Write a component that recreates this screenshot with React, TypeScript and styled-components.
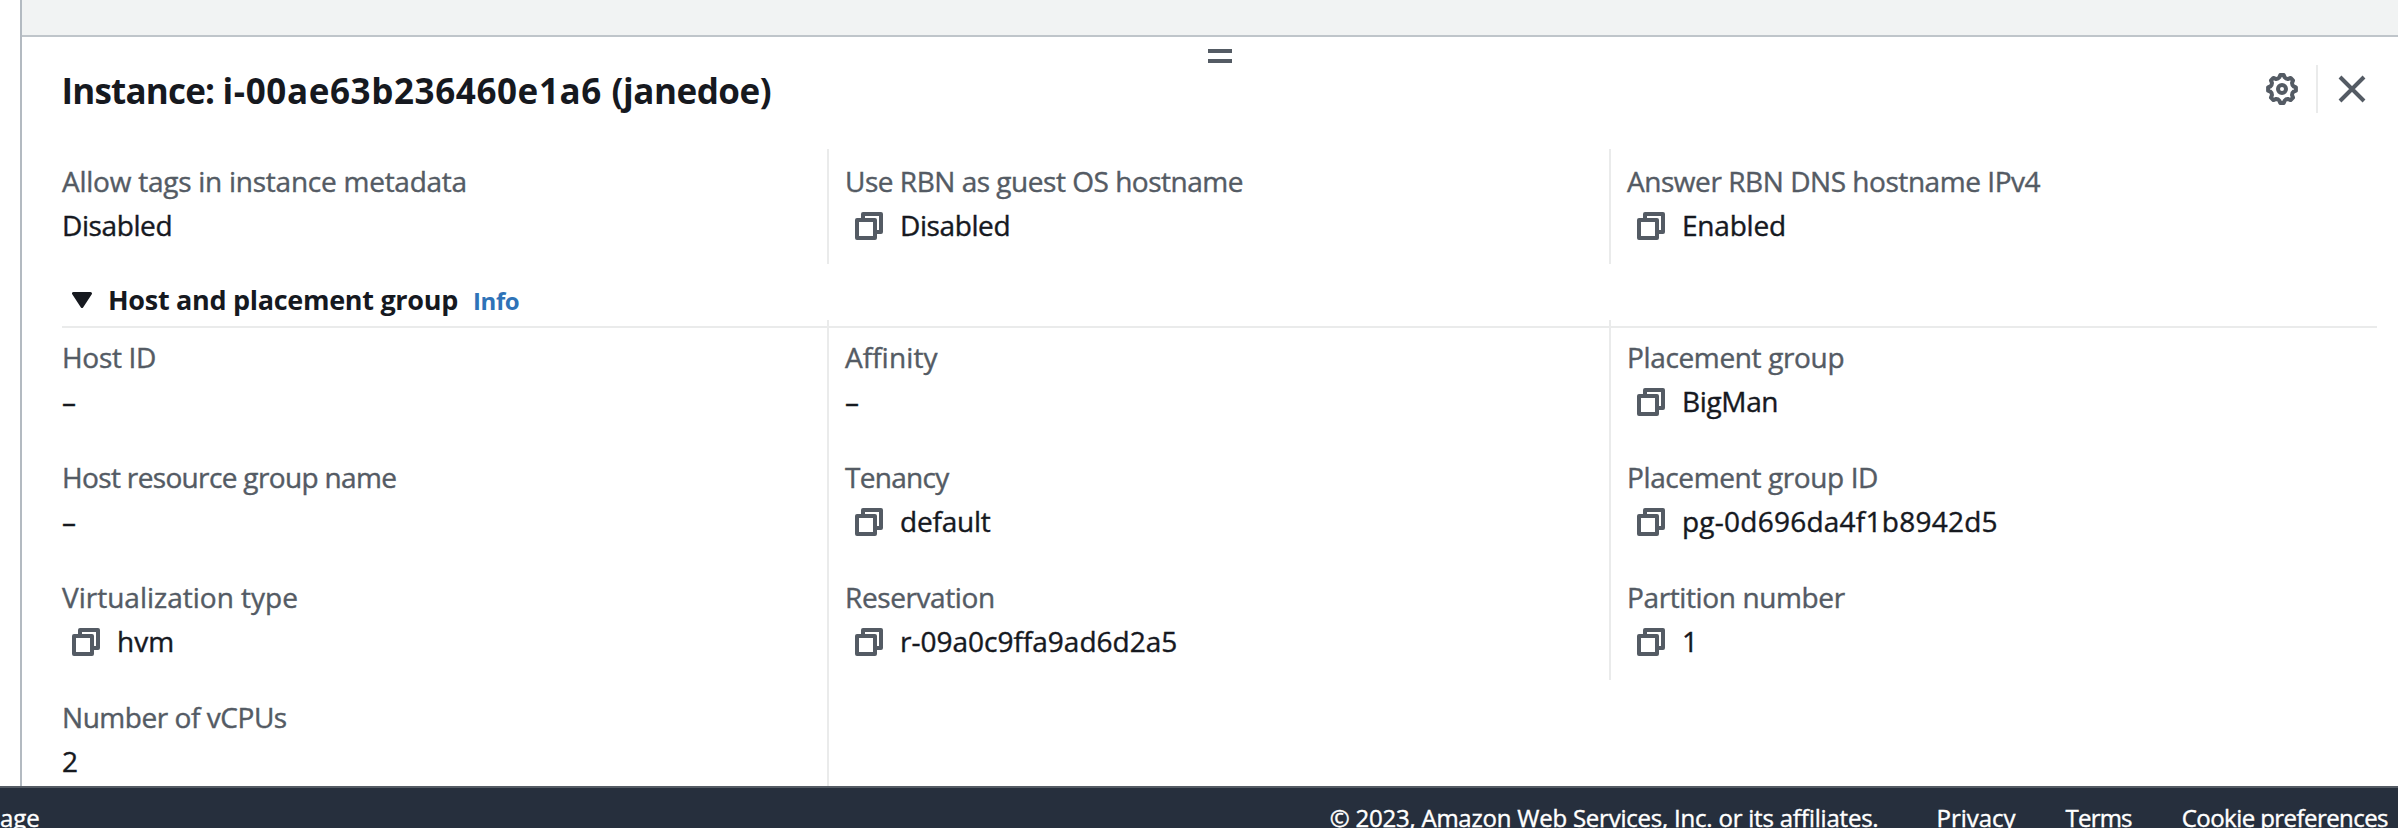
import React from 'react';
import styled, { createGlobalStyle } from 'styled-components';

const ink = '#16191f';
const muted = '#545b64';
const rule = '#eaebeb';

const GlobalStyle = createGlobalStyle`
  * { box-sizing: border-box; }
  body {
    margin: 0;
    background: #fff;
    color: ${ink};
    font-family: "Open Sans", "Noto Sans", sans-serif;
    font-feature-settings: "liga" 1;
    overflow: hidden;
  }
`;

const Page = styled.div`
  width: 2398px;
  height: 828px;
  display: flex;
  flex-direction: column;
  overflow: hidden;
`;

const Workspace = styled.main`
  height: 786px;
  flex: none;
  margin-left: 20px;
  border-left: 2px solid #b3bac1;
  display: flex;
  flex-direction: column;
  overflow: hidden;
`;

const ListArea = styled.div`
  height: 35px;
  flex: none;
  background: #f1f3f3;
`;

const SplitPanel = styled.section`
  flex: 1;
  min-height: 0;
  border-top: 2px solid #bfc5ca;
  padding: 12px 21px 0 40px;
`;

const DragHandle = styled.div`
  width: 24px;
  height: 14px;
  margin: 0 auto 2px;
  border: solid ${muted};
  border-width: 4px 0;
`;

const PanelHeader = styled.header`
  height: 48px;
  display: flex;
  align-items: center;
  padding-right: 9px;
`;

const Title = styled.h2`
  flex: 1;
  margin: 4px 0 0 -0.5px;
  font-size: 35px;
  line-height: 48px;
  font-weight: 700;
`;

const Tracked = styled.span<{ $track: number }>`
  letter-spacing: ${p => p.$track}px;
`;

const IconButton = styled.button`
  width: 32px;
  height: 32px;
  padding: 0;
  border: 0;
  background: none;
  color: ${muted};
  svg { display: block; }
`;

const ActionDivider = styled.span`
  width: 2px;
  height: 48px;
  margin: 0 18px;
  background: ${rule};
`;

const Columns = styled.div<{ $offset: number }>`
  display: grid;
  grid-template-columns: 765px 782px 1fr;
  align-items: start;
  margin-top: ${p => p.$offset}px;
`;

const Column = styled.div<{ $height: number; $top: number; $divided?: boolean }>`
  height: ${p => p.$height}px;
  padding-top: ${p => p.$top}px;
  ${p => p.$divided && `border-left: 2px solid ${rule}; padding-left: 16px;`}
`;

const Field = styled.div`
  height: 120px;
`;

const Label = styled.div<{ $track: number }>`
  font-size: 28px;
  line-height: 44px;
  color: ${muted};
  letter-spacing: ${p => p.$track}px;
  -webkit-text-stroke: 0.4px currentColor;
  white-space: nowrap;
`;

const Value = styled.div<{ $track: number }>`
  display: flex;
  align-items: center;
  gap: 17px;
  font-size: 28px;
  line-height: 44px;
  letter-spacing: ${p => p.$track}px;
  -webkit-text-stroke: 0.4px currentColor;
  white-space: nowrap;
  svg { flex: none; margin: 2px 0 0 10px; color: ${muted}; }
`;

const SectionHeader = styled.div`
  height: 64px;
  display: flex;
  align-items: baseline;
  padding: 18px 0 0 10px;
  border-bottom: 2px solid ${rule};
  > svg { margin-right: 16px; transform: translateY(-2px); }
`;

const SectionTitle = styled.h3`
  margin: 0;
  font-size: 27px;
  line-height: 36px;
  letter-spacing: -0.3px;
`;

const InfoLink = styled.a`
  margin-left: 15px;
  font-size: 24px;
  line-height: 32px;
  font-weight: 700;
  letter-spacing: -0.4px;
  color: #2e73b8;
`;

const Footer = styled.footer`
  flex: none;
  height: 42px;
  display: flex;
  gap: 50px;
  padding: 14px 10px 0 0;
  border-top: 2px solid ${muted};
  background: #262f3d;
  color: #fff;
  font-size: 24px;
  line-height: 32px;
  -webkit-text-stroke: 0.4px currentColor;
  overflow: hidden;
`;

const FooterItem = styled.span<{ $track?: number; $push?: boolean }>`
  white-space: nowrap;
  letter-spacing: ${p => p.$track ?? 0}px;
  ${p => p.$push && 'margin-left: auto; margin-right: 8px;'}
`;

const CopyIcon = () => (
  <svg width="28" height="28" viewBox="0 0 28 28" fill="none" stroke="currentColor" strokeWidth="4" strokeLinejoin="round">
    <path d="M8 6V2H26V20H22" />
    <rect x="2" y="8" width="18" height="18" />
  </svg>
);

const gearOutline = (() => {
  const at = (deg: number, r: number) => {
    const a = (deg * Math.PI) / 180;
    return `${(16 + r * Math.cos(a)).toFixed(2)} ${(16 + r * Math.sin(a)).toFixed(2)}`;
  };
  let d = `M${at(-7, 14)}`;
  for (let tooth = 0; tooth < 360; tooth += 45) {
    d += `L${at(tooth + 7, 14)}L${at(tooth + 13, 11.9)}Q${at(tooth + 22.5, 10.6)} ${at(tooth + 32, 11.9)}L${at(tooth + 38, 14)}`;
  }
  return d + 'Z';
})();

const GearIcon = () => (
  <svg width="32" height="32" viewBox="0 0 32 32" fill="none" stroke="currentColor" strokeWidth="4" strokeLinejoin="round">
    <path d={gearOutline} />
    <circle cx="16" cy="16" r="4" />
  </svg>
);

const CloseIcon = () => (
  <svg width="32" height="32" viewBox="0 0 32 32" fill="none" stroke="currentColor" strokeWidth="4">
    <path d="M4 4L28 28M28 4L4 28" />
  </svg>
);

const CaretIcon = () => (
  <svg width="20" height="16" viewBox="0 0 20 16" fill={ink} stroke={ink} strokeWidth="3" strokeLinejoin="round">
    <path d="M1.5 1.5H18.5L10 14.5Z" />
  </svg>
);

type Entry = { label: string; track: number; value: string; valueTrack?: number; copy?: boolean };

const hostnameColumns: Entry[][] = [
  [{ label: 'Allow tags in instance metadata', track: -0.25, value: 'Disabled', valueTrack: -0.4 }],
  [{ label: 'Use RBN as guest OS hostname', track: -0.48, value: 'Disabled', valueTrack: -0.4, copy: true }],
  [{ label: 'Answer RBN DNS hostname IPv4', track: -0.45, value: 'Enabled', valueTrack: -0.2, copy: true }],
];

const placementColumns: Entry[][] = [
  [
    { label: 'Host ID', track: -0.3, value: '–' },
    { label: 'Host resource group name', track: -0.65, value: '–' },
    { label: 'Virtualization type', track: 0, value: 'hvm', copy: true },
    { label: 'Number of vCPUs', track: -0.45, value: '2' },
  ],
  [
    { label: 'Affinity', track: 0.15, value: '–' },
    { label: 'Tenancy', track: -0.7, value: 'default', valueTrack: -0.2, copy: true },
    { label: 'Reservation', track: -0.4, value: 'r-09a0c9ffa9ad6d2a5', copy: true },
  ],
  [
    { label: 'Placement group', track: -0.35, value: 'BigMan', valueTrack: -0.35, copy: true },
    { label: 'Placement group ID', track: -0.38, value: 'pg-0d696da4f1b8942d5', valueTrack: 0.24, copy: true },
    { label: 'Partition number', track: -0.38, value: '1', copy: true },
  ],
];

const Fields = ({ items }: { items: Entry[] }) => (
  <>
    {items.map(item => (
      <Field key={item.label}>
        <Label $track={item.track}>{item.label}</Label>
        <Value $track={item.valueTrack ?? 0}>
          {item.copy && <CopyIcon />}
          <span>{item.value}</span>
        </Value>
      </Field>
    ))}
  </>
);

export default function App() {
  return (
    <Page>
      <GlobalStyle />
      <Workspace>
        <ListArea />
        <SplitPanel>
          <DragHandle />
          <PanelHeader>
            <Title>
              <Tracked $track={-0.8}>Instance: </Tracked>
              <Tracked $track={0.6}>i-00ae63b236460e1a6 </Tracked>
              <Tracked $track={-0.45}>(janedoe)</Tracked>
            </Title>
            <IconButton aria-label="Preferences"><GearIcon /></IconButton>
            <ActionDivider />
            <IconButton aria-label="Close"><CloseIcon /></IconButton>
          </PanelHeader>
          <Columns $offset={36}>
            {hostnameColumns.map((items, i) => (
              <Column key={i} $divided={i > 0} $top={10} $height={115}><Fields items={items} /></Column>
            ))}
          </Columns>
          <SectionHeader>
            <CaretIcon />
            <SectionTitle>Host and placement group</SectionTitle>
            <InfoLink>Info</InfoLink>
          </SectionHeader>
          <Columns $offset={-8}>
            {placementColumns.map((items, i) => (
              <Column key={i} $divided={i > 0} $top={15} $height={i === 2 ? 360 : 480}><Fields items={items} /></Column>
            ))}
          </Columns>
        </SplitPanel>
      </Workspace>
      <Footer>
        <FooterItem>age</FooterItem>
        <FooterItem $push $track={-0.22}>© 2023, Amazon Web Services, Inc. or its affiliates.</FooterItem>
        <FooterItem>Privacy</FooterItem>
        <FooterItem $track={-0.8}>Terms</FooterItem>
        <FooterItem $track={-0.56}>Cookie preferences</FooterItem>
      </Footer>
    </Page>
  );
}
